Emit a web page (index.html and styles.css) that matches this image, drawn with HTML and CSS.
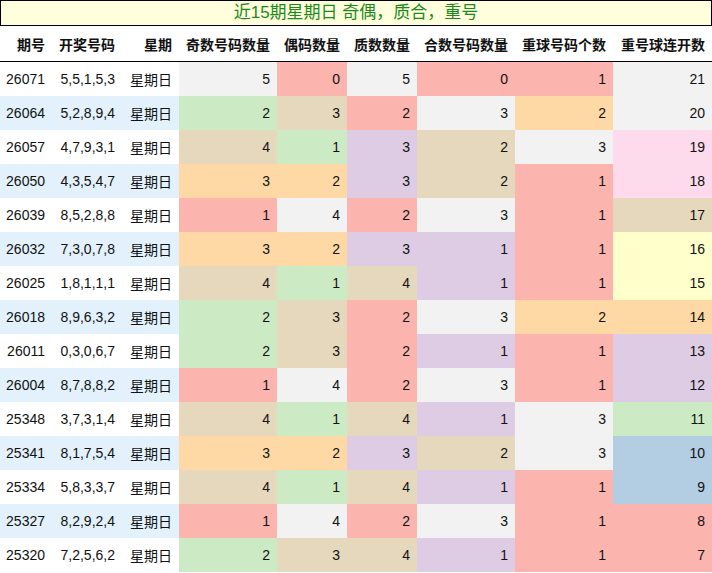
FILE: index.html
```html
<!DOCTYPE html>
<html lang="zh">
<head>
<meta charset="utf-8">
<title>近15期星期日 奇偶，质合，重号</title>
<link rel="stylesheet" href="styles.css">
</head>
<body>
<div class="title">近15期星期日 奇偶，质合，重号</div>
<table class="grid">
<colgroup>
<col class="w52"><col class="w70"><col class="w57"><col class="w98"><col class="w70"><col class="w70"><col class="w98"><col class="w98"><col class="w99">
</colgroup>
<thead>
<tr><th>期号</th><th>开奖号码</th><th>星期</th><th>奇数号码数量</th><th>偶码数量</th><th>质数数量</th><th>合数号码数量</th><th>重球号码个数</th><th>重号球连开数</th></tr>
</thead>
<tbody>
<tr><td>26071</td><td>5,5,1,5,3</td><td>星期日</td><td class="grey">5</td><td class="red">0</td><td class="grey">5</td><td class="red">0</td><td class="red">1</td><td class="grey">21</td></tr>
<tr class="alt"><td>26064</td><td>5,2,8,9,4</td><td>星期日</td><td class="green">2</td><td class="tan">3</td><td class="red">2</td><td class="grey">3</td><td class="orange">2</td><td class="grey">20</td></tr>
<tr><td>26057</td><td>4,7,9,3,1</td><td>星期日</td><td class="tan">4</td><td class="green">1</td><td class="purple">3</td><td class="tan">2</td><td class="grey">3</td><td class="pink">19</td></tr>
<tr class="alt"><td>26050</td><td>4,3,5,4,7</td><td>星期日</td><td class="orange">3</td><td class="orange">2</td><td class="purple">3</td><td class="tan">2</td><td class="red">1</td><td class="pink">18</td></tr>
<tr><td>26039</td><td>8,5,2,8,8</td><td>星期日</td><td class="red">1</td><td class="grey">4</td><td class="red">2</td><td class="grey">3</td><td class="red">1</td><td class="tan">17</td></tr>
<tr class="alt"><td>26032</td><td>7,3,0,7,8</td><td>星期日</td><td class="orange">3</td><td class="orange">2</td><td class="purple">3</td><td class="purple">1</td><td class="red">1</td><td class="yellow">16</td></tr>
<tr><td>26025</td><td>1,8,1,1,1</td><td>星期日</td><td class="tan">4</td><td class="green">1</td><td class="tan">4</td><td class="purple">1</td><td class="red">1</td><td class="yellow">15</td></tr>
<tr class="alt"><td>26018</td><td>8,9,6,3,2</td><td>星期日</td><td class="green">2</td><td class="tan">3</td><td class="red">2</td><td class="grey">3</td><td class="orange">2</td><td class="orange">14</td></tr>
<tr><td>26011</td><td>0,3,0,6,7</td><td>星期日</td><td class="green">2</td><td class="tan">3</td><td class="red">2</td><td class="purple">1</td><td class="red">1</td><td class="purple">13</td></tr>
<tr class="alt"><td>26004</td><td>8,7,8,8,2</td><td>星期日</td><td class="red">1</td><td class="grey">4</td><td class="red">2</td><td class="grey">3</td><td class="red">1</td><td class="purple">12</td></tr>
<tr><td>25348</td><td>3,7,3,1,4</td><td>星期日</td><td class="tan">4</td><td class="green">1</td><td class="tan">4</td><td class="purple">1</td><td class="grey">3</td><td class="green">11</td></tr>
<tr class="alt"><td>25341</td><td>8,1,7,5,4</td><td>星期日</td><td class="orange">3</td><td class="orange">2</td><td class="purple">3</td><td class="tan">2</td><td class="grey">3</td><td class="blue">10</td></tr>
<tr><td>25334</td><td>5,8,3,3,7</td><td>星期日</td><td class="tan">4</td><td class="green">1</td><td class="tan">4</td><td class="purple">1</td><td class="red">1</td><td class="blue">9</td></tr>
<tr class="alt"><td>25327</td><td>8,2,9,2,4</td><td>星期日</td><td class="red">1</td><td class="grey">4</td><td class="red">2</td><td class="grey">3</td><td class="red">1</td><td class="red">8</td></tr>
<tr><td>25320</td><td>7,2,5,6,2</td><td>星期日</td><td class="green">2</td><td class="tan">3</td><td class="tan">4</td><td class="purple">1</td><td class="red">1</td><td class="red">7</td></tr>
</tbody>
</table>
</body>
</html>
```

FILE: styles.css
```css
html, body {
  margin: 0;
  padding: 0;
  background: #ffffff;
}
body {
  width: 712px;
  font-family: "Liberation Sans", "Noto Sans CJK SC", sans-serif;
  color: #111111;
}
.title {
  box-sizing: border-box;
  height: 26px;
  border: 1px solid #000000;
  background: #ffffdd;
  color: #1a8a1a;
  font-size: 17px;
  line-height: 24px;
  text-align: center;
}
.grid {
  width: 712px;
  border-collapse: collapse;
  table-layout: fixed;
  font-size: 14px;
}
.w52 { width: 52px; }
.w57 { width: 57px; }
.w70 { width: 70px; }
.w98 { width: 98px; }
.w99 { width: 99px; }
.grid th {
  height: 35px;
  padding: 0 7px 0 0;
  text-align: right;
  font-weight: bold;
  border-bottom: 1px solid #000000;
  white-space: nowrap;
  overflow: hidden;
}
.grid td {
  height: 34px;
  padding: 0 7px 0 0;
  text-align: right;
  white-space: nowrap;
  overflow: hidden;
}
.grid tr.alt td { background: #e3f1fc; }
.grid td.red, .grid tr.alt td.red { background: #fbb4ae; }
.grid td.blue, .grid tr.alt td.blue { background: #b3cde3; }
.grid td.green, .grid tr.alt td.green { background: #ccebc5; }
.grid td.purple, .grid tr.alt td.purple { background: #decbe4; }
.grid td.orange, .grid tr.alt td.orange { background: #fed9a6; }
.grid td.yellow, .grid tr.alt td.yellow { background: #ffffcc; }
.grid td.tan, .grid tr.alt td.tan { background: #e5d8bd; }
.grid td.pink, .grid tr.alt td.pink { background: #fddaec; }
.grid td.grey, .grid tr.alt td.grey { background: #f2f2f2; }
```
